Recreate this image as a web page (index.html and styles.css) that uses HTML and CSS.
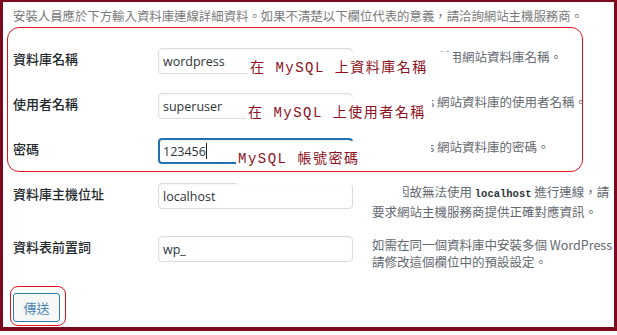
FILE: index.html
```html
<!DOCTYPE html>
<html lang="zh-Hant">
<head>
<meta charset="UTF-8">
<meta name="viewport" content="width=device-width, initial-scale=1.0">
<title>資料庫連線設定</title>
<link rel="stylesheet" href="styles.css">
</head>
<body>

<div class="frame">
    <p class="intro">安裝人員應於下方輸入資料庫連線詳細資料。如果不清楚以下欄位代表的意義，請洽詢網站主機服務商。</p>

    <div class="form-table">
        <!-- Database name -->
        <div class="form-row">
            <label class="field-label" for="dbname">資料庫名稱</label>
            <input class="field-input" id="dbname" type="text" value="wordpress">
            <p class="field-desc">WordPress 所用網站資料庫名稱。</p>
        </div>

        <!-- User name -->
        <div class="form-row">
            <label class="field-label" for="uname">使用者名稱</label>
            <input class="field-input" id="uname" type="text" value="superuser">
            <p class="field-desc">WordPress 網站資料庫的使用者名稱。</p>
        </div>

        <!-- Password (focused) -->
        <div class="form-row">
            <label class="field-label" for="pwd">密碼</label>
            <input class="field-input is-focused" id="pwd" type="text" value="123456">
            <p class="field-desc">WordPress 網站資料庫的密碼。</p>
        </div>

        <!-- Host -->
        <div class="form-row row-tall">
            <label class="field-label" for="dbhost">資料庫主機位址</label>
            <input class="field-input" id="dbhost" type="text" value="localhost">
            <p class="field-desc">如果因故無法使用 <code>localhost</code> 進行連線，請<br>要求網站主機服務商提供正確對應資訊。</p>
        </div>

        <!-- Table prefix -->
        <div class="form-row">
            <label class="field-label" for="prefix">資料表前置詞</label>
            <input class="field-input" id="prefix" type="text" value="wp_">
            <p class="field-desc">如需在同一個資料庫中安裝多個 WordPress，<br>請修改這個欄位中的預設設定。</p>
        </div>
    </div>

    <button class="submit" type="button">傳送</button>

    <!-- Annotations drawn over the screenshot -->
    <div class="mark-box"></div>
    <div class="mark-button"></div>
    <span class="caret"></span>
    <div class="note note-1">在 MySQL 上資料庫名稱</div>
    <div class="note note-2">在 MySQL 上使用者名稱</div>
    <div class="note note-3">MySQL 帳號密碼</div>
    <div class="mask mask-1"></div>
    <div class="mask mask-2"></div>
</div>

</body>
</html>
```

FILE: styles.css
```css
* {
    box-sizing: border-box;
}
body {
    margin: 0;
    background-color: #fff;
    font-family: "Noto Sans CJK TC", "Noto Sans", sans-serif;
}
.frame {
    position: relative;
    width: 617px;
    height: 331px;
    border-style: solid;
    border-color: #7c0a1e;
    border-width: 2px 3px 4px 3px;
    padding: 5px 0 0 10px;
    overflow: hidden;
    background-color: #fff;
}
.intro {
    margin: 0;
    font-size: 12.4px;
    line-height: 18px;
    color: #7a7a7a;
    white-space: nowrap;
}

/* Form rows */
.form-table {
    display: flex;
    flex-direction: column;
    gap: 19px;
    margin-top: 23px;
}
.form-row {
    display: grid;
    grid-template-columns: 126px 195px 1fr;
    column-gap: 19px;
    align-items: start;
}
.row-tall {
    margin-bottom: -3px;
}
.field-label {
    font-size: 13px;
    line-height: 22px;
    font-weight: 500;
    color: #23282d;
}
.field-input {
    height: 26px;
    width: 195px;
    padding: 0 4px;
    border: 1px solid #dcdcde;
    border-radius: 4px;
    box-shadow: inset 0 1px 2px rgba(0, 0, 0, 0.05);
    font-family: "Open Sans", sans-serif;
    font-size: 12.5px;
    color: #2c3338;
    background-color: #fff;
    outline: none;
}
.field-input.is-focused {
    border: 2px solid #2271b1;
    padding: 0 3px;
}
.field-desc {
    margin: 0;
    font-size: 12.5px;
    line-height: 17px;
    color: #646970;
    white-space: nowrap;
}
.field-desc code {
    font-family: "Liberation Mono", monospace;
    font-size: 10.5px;
    font-weight: bold;
    color: #2c3338;
}

/* Submit */
.submit {
    margin-top: 23px;
    width: 47px;
    height: 29px;
    padding: 0;
    border: 1px solid #2e79ae;
    border-radius: 3px;
    background-color: #f6f7f7;
    font-family: "Noto Sans CJK TC", sans-serif;
    font-size: 13px;
    color: #4a84b4;
}

/* Annotations */
.mark-box {
    position: absolute;
    left: 4px;
    top: 25px;
    width: 576px;
    height: 145px;
    border: 1.5px solid #e8121c;
    border-radius: 12px;
}
.mark-button {
    position: absolute;
    left: 7px;
    top: 284px;
    width: 56px;
    height: 40px;
    border: 1.5px solid #e8121c;
    border-radius: 8px;
}
.caret {
    position: absolute;
    left: 203px;
    top: 141px;
    width: 1px;
    height: 16px;
    background-color: #222;
}
.note {
    position: absolute;
    display: flex;
    align-items: center;
    padding-left: 2px;
    background-color: #fff;
    font-family: "Liberation Mono", "Noto Sans CJK TC", monospace;
    font-size: 14px;
    letter-spacing: 1.5px;
    color: #8c1020;
    white-space: nowrap;
}
.note-1 {
    left: 245px;
    top: 50px;
    width: 205px;
    height: 25px;
    padding-top: 3px;
}
.note-2 {
    left: 243px;
    top: 95px;
    width: 186px;
    height: 25px;
    padding-top: 3px;
}
.note-3 {
    left: 233px;
    top: 139px;
    width: 195px;
    height: 28px;
    padding-top: 4px;
}
.mask {
    position: absolute;
    background-color: #fff;
}
.mask-1 {
    left: 234px;
    top: 178px;
    width: 118px;
    height: 5px;
}
.mask-2 {
    left: 369px;
    top: 182px;
    width: 31px;
    height: 17px;
}
```
